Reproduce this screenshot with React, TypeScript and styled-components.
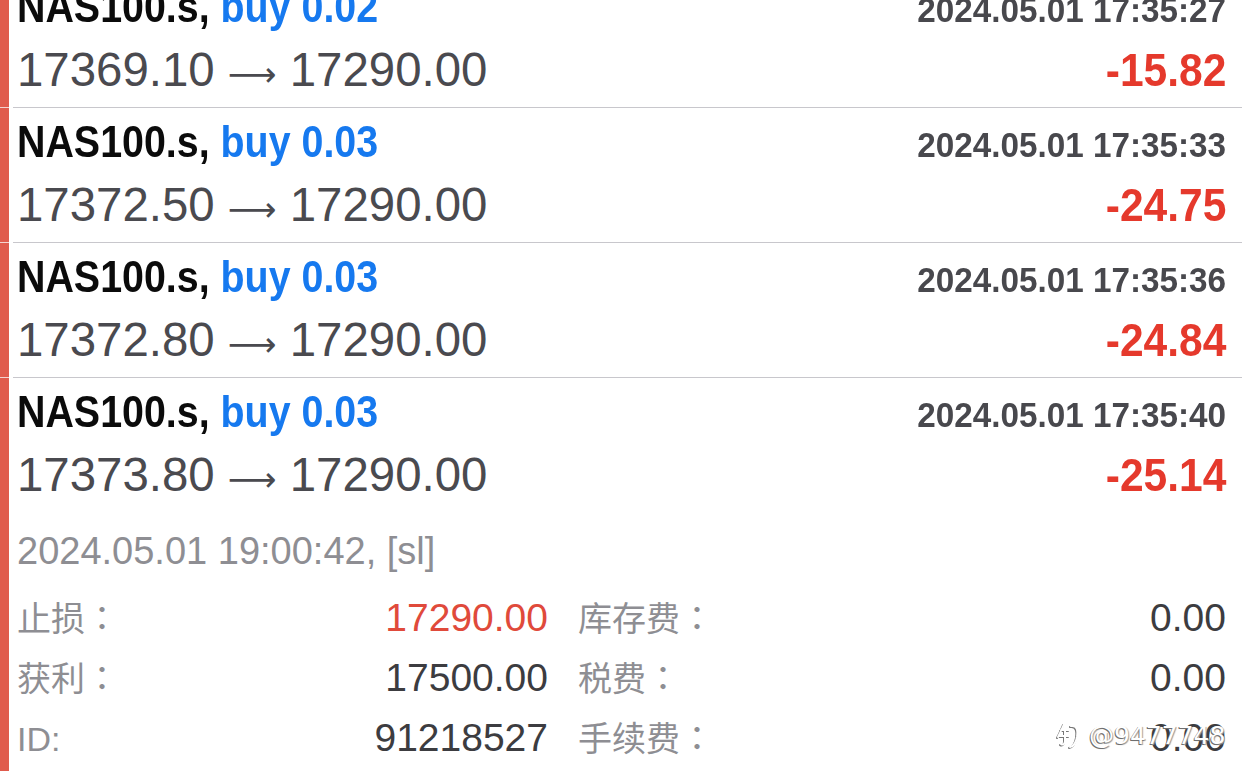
import styled, { createGlobalStyle, css } from "styled-components";

const GlobalStyle = createGlobalStyle`
  html, body {
    margin: 0;
    padding: 0;
    background: #ffffff;
  }
  body {
    font-family: "Liberation Sans", Arial, sans-serif;
  }
`;

// the app uses a condensed bold face; squeeze Liberation Sans to match it
const condensed = (origin: string, factor: number) => css`
  display: inline-block;
  font-family: "Liberation Sans", Arial, sans-serif;
  font-weight: 700;
  transform: scaleX(${factor});
  transform-origin: ${origin} center;
`;

const Screen = styled.div`
  position: relative;
  width: 1242px;
  height: 780px;
  overflow: hidden;
  background: #ffffff;
`;

const List = styled.div`
  display: flex;
  flex-direction: column;
  margin-top: -27px;
`;

const Row = styled.div`
  display: flex;
  align-items: stretch;
`;

const Marker = styled.div<{ $last?: boolean }>`
  flex: 0 0 9px;
  background: #e05b4d;
  border-bottom: 1px solid ${(p) => (p.$last ? "#e05b4d" : "#f4d3cf")};
`;

const Body = styled.div<{ $last?: boolean }>`
  flex: 1;
  margin-left: 4px;
  padding: 6px 16px 2px 4px;
  border-bottom: 1px solid ${(p) => (p.$last ? "transparent" : "#c8c7cc")};
`;

const Line = styled.div<{ $height: number }>`
  display: flex;
  justify-content: space-between;
  align-items: baseline;
  height: ${(p) => p.$height}px;
  line-height: ${(p) => p.$height}px;
  white-space: nowrap;
`;

const Title = styled.span`
  ${condensed("left", 0.875)}
  font-size: 45px;
  color: #0b0b0b;
`;

const Side = styled.span`
  color: #1679ef;
`;

const Stamp = styled.span`
  ${condensed("right", 0.95)}
  font-size: 35px;
  color: #48484d;
`;

const Prices = styled.span`
  font-size: 47.4px;
  color: #4a4a4f;
`;

const Arrow = styled.span`
  font-family: "DejaVu Sans", sans-serif;
  font-size: 34px;
`;

const Profit = styled.span`
  ${condensed("right", 0.925)}
  font-size: 46px;
  color: #e5392c;
`;

const Details = styled.div`
  padding-top: 16px;
`;

const CloseInfo = styled.div`
  height: 50px;
  line-height: 50px;
  font-size: 38px;
  color: #8e8e93;
  white-space: nowrap;
`;

const Grid = styled.div`
  display: grid;
  grid-template-columns: 531px 1fr;
  column-gap: 30px;
  margin-top: 12px;
`;

const Field = styled.div`
  display: flex;
  justify-content: space-between;
  align-items: baseline;
  height: 60px;
  line-height: 60px;
  white-space: nowrap;
`;

const Label = styled.span`
  font-family: "Liberation Sans", "Noto Sans CJK TC", sans-serif;
  font-size: 34px;
  color: #8e8e93;
`;

const Value = styled.span<{ $red?: boolean }>`
  font-size: 39px;
  color: ${(p) => (p.$red ? "#e04a3b" : "#3c3c40")};
`;

const Watermark = styled.div`
  position: absolute;
  left: 1056px;
  top: 720px;
  display: flex;
  align-items: center;
  gap: 9px;
  font-family: "DejaVu Sans", sans-serif;
  font-size: 25px;
  color: #ffffff;
  text-shadow: -1px 1px 0 #6f6f6f, 1px 1px 1px #9a9a9a;
  white-space: nowrap;
`;

type Trade = {
  symbol: string;
  lot: string;
  time: string;
  open: string;
  close: string;
  profit: string;
};

const trades: Trade[] = [
  { symbol: "NAS100.s", lot: "buy 0.02", time: "2024.05.01 17:35:27", open: "17369.10", close: "17290.00", profit: "-15.82" },
  { symbol: "NAS100.s", lot: "buy 0.03", time: "2024.05.01 17:35:33", open: "17372.50", close: "17290.00", profit: "-24.75" },
  { symbol: "NAS100.s", lot: "buy 0.03", time: "2024.05.01 17:35:36", open: "17372.80", close: "17290.00", profit: "-24.84" },
  { symbol: "NAS100.s", lot: "buy 0.03", time: "2024.05.01 17:35:40", open: "17373.80", close: "17290.00", profit: "-25.14" },
];

const fields = [
  { label: "止损：", value: "17290.00", red: true, label2: "库存费：", value2: "0.00" },
  { label: "获利：", value: "17500.00", red: false, label2: "税费：", value2: "0.00" },
  { label: "ID:", value: "91218527", red: false, label2: "手续费：", value2: "0.00" },
];

function TradeRow({ trade, expanded }: { trade: Trade; expanded?: boolean }) {
  return (
    <Row>
      <Marker $last={expanded} />
      <Body $last={expanded}>
        <Line $height={56}>
          <Title>
            {trade.symbol}, <Side>{trade.lot}</Side>
          </Title>
          <Stamp>{trade.time}</Stamp>
        </Line>
        <Line $height={70}>
          <Prices>
            {trade.open} <Arrow>⟶</Arrow> {trade.close}
          </Prices>
          <Profit>{trade.profit}</Profit>
        </Line>
        {expanded && (
          <Details>
            <CloseInfo>2024.05.01 19:00:42, [sl]</CloseInfo>
            <Grid>
              {fields.flatMap((f) => [
                <Field key={f.label}>
                  <Label>{f.label}</Label>
                  <Value $red={f.red}>{f.value}</Value>
                </Field>,
                <Field key={f.label2}>
                  <Label>{f.label2}</Label>
                  <Value>{f.value2}</Value>
                </Field>,
              ])}
            </Grid>
          </Details>
        )}
      </Body>
    </Row>
  );
}

function ZhihuMark() {
  return (
    <svg width="24" height="30" viewBox="0 0 24 30" fill="none">
      <path
        d="M8 4 C6 9 4 13 2 17 M5 10 H13 M9 10 V21 C9 24 7 25 5 24 M3 16 H13 M15 6 C21 5 22 10 21 17 C20 23 18 26 14 27"
        stroke="#ffffff"
        strokeWidth="2"
        strokeLinecap="round"
        style={{ filter: "drop-shadow(-1px 1px 0 #777)" }}
      />
    </svg>
  );
}

export default function App() {
  return (
    <Screen>
      <GlobalStyle />
      <List>
        {trades.map((t, i) => (
          <TradeRow key={t.time} trade={t} expanded={i === trades.length - 1} />
        ))}
      </List>
      <Watermark>
        <ZhihuMark />
        <span>@9477748</span>
      </Watermark>
    </Screen>
  );
}
